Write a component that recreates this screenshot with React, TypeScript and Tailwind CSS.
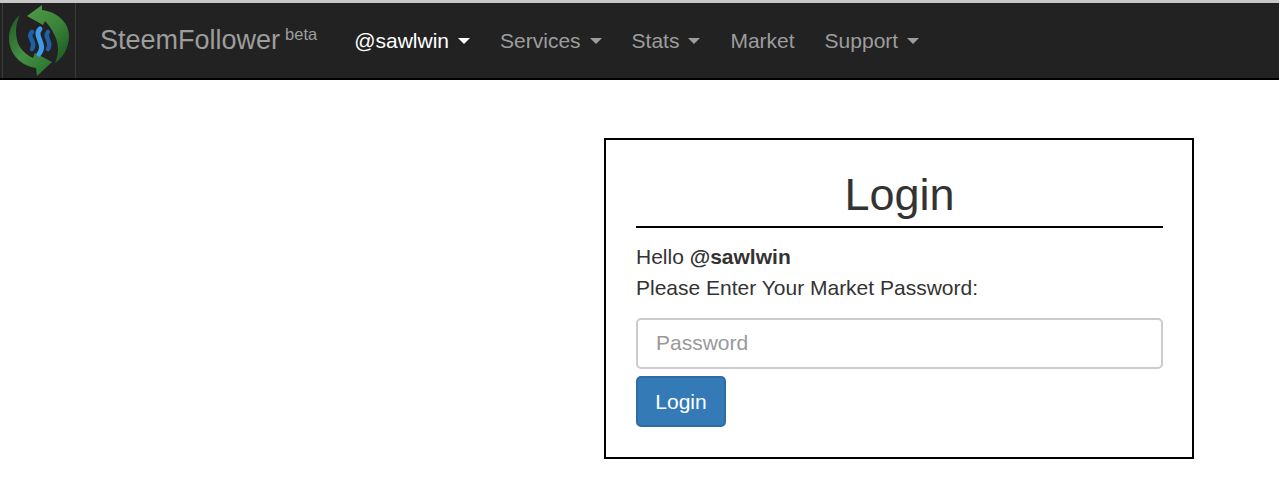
import React from "react";

function Caret({ color }: { color: string }) {
  return (
    <span
      className={`ml-[9px] inline-block h-0 w-0 border-x-[6px] border-t-[6px] border-x-transparent ${color}`}
    />
  );
}

function Logo() {
  return (
    <svg width="62" height="73" viewBox="0 0 62 73" className="block">
      <defs>
        <linearGradient id="arrowTop" x1="0.1" y1="0" x2="0.8" y2="1">
          <stop offset="0" stopColor="#4f9a47" />
          <stop offset="0.55" stopColor="#3a8238" />
          <stop offset="1" stopColor="#1d5c26" />
        </linearGradient>
        <linearGradient id="arrowBottom" x1="0.1" y1="0" x2="0.8" y2="1">
          <stop offset="0" stopColor="#235a28" />
          <stop offset="0.55" stopColor="#458f44" />
          <stop offset="1" stopColor="#2b7431" />
        </linearGradient>
      </defs>
      <path
        d="M19 12 L34 1 L34 6 C50 8 61 19 61 32 C61 44 55 54 47 59 C51 49 51 41 47 32 C44 25 40 20 37 17 L35 21 Z"
        fill="url(#arrowTop)"
      />
      <path
        d="M12 11 C5 17 1 25 1 34 C1 50 13 62 28 64 L29 72 L44 58 L27 49 L25 54 C17 50 11 44 9 36 C7 27 8 19 12 11 Z"
        fill="url(#arrowBottom)"
      />
      <g fill="none" strokeLinecap="round">
        <path d="M24 28 C18 33 29 38 24 45" stroke="#1f5fa8" strokeWidth="4.5" />
        <path d="M32 25 C25 32 39 40 31 50" stroke="#3d9be9" strokeWidth="5" />
        <path d="M40 28 C35 33 45 38 40 45" stroke="#1f5fa8" strokeWidth="4.5" />
      </g>
    </svg>
  );
}

function NavItem({ label, caret = true, active = false }: { label: string; caret?: boolean; active?: boolean }) {
  return (
    <a className={`flex items-center px-[15px] ${active ? "text-white" : "text-[#9d9d9d]"}`}>
      {label}
      {caret && <Caret color={active ? "border-t-white" : "border-t-[#9d9d9d]"} />}
    </a>
  );
}

export default function App() {
  return (
    <div className="min-h-[502px] bg-white font-['Liberation_Sans',Arial,sans-serif] text-[21px] text-[#333333]">
      <nav className="flex h-[80px] border-t-[3px] border-b-2 border-t-[#c8c8c8] border-b-black bg-[#222222]">
        <div className="ml-[2px] flex w-[74px] items-center justify-center border-x border-[#3a3a3a]">
          <Logo />
        </div>
        <a className="ml-[24px] flex items-center text-[27px] text-[#9d9d9d]">
          SteemFollower
          <sup className="static mb-[12px] ml-[5px] text-[16.5px] leading-none">beta</sup>
        </a>
        <div className="ml-[22px] flex items-center">
          <NavItem label="@sawlwin" active />
          <NavItem label="Services" />
          <NavItem label="Stats" />
          <NavItem label="Market" caret={false} />
          <NavItem label="Support" />
        </div>
      </nav>

      <div className="flex justify-end pt-[58px] pr-[85px]">
        <form className="h-[321px] w-[590px] border-2 border-black pr-[29px] pl-[30px]">
          <h1 className="border-b-2 border-black pt-[30px] pb-[6px] text-center text-[45px] leading-[1.1]">
            Login
          </h1>
          <p className="mt-[14px] leading-[30px]">
            Hello <b>@sawlwin</b>
          </p>
          <p className="mt-[1px] leading-[30px]">Please Enter Your Market Password:</p>
          <input
            type="password"
            placeholder="Password"
            className="mt-[15px] block h-[51px] w-full rounded-[5px] border-2 border-[#cccccc] px-[18px] text-[21px] outline-none placeholder:text-[#999999]"
          />
          <button
            type="button"
            className="mt-[7px] block h-[51px] w-[90px] rounded-[5px] border-2 border-[#2e6da4] bg-[#337ab7] pt-[2px] text-[21px] text-white"
          >
            Login
          </button>
        </form>
      </div>
    </div>
  );
}
